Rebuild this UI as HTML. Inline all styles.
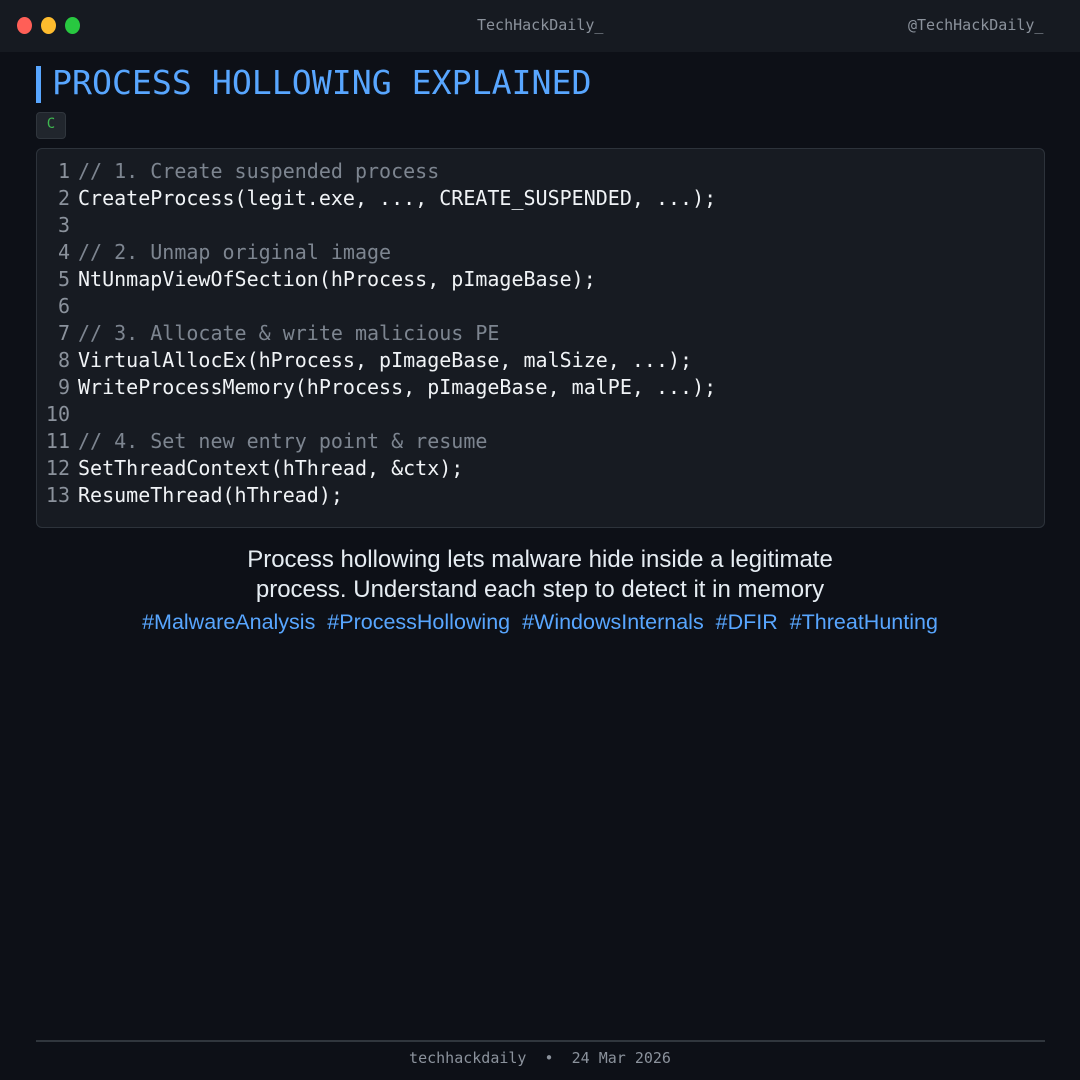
<!DOCTYPE html>
<html><head><meta charset="utf-8"><style>
*{margin:0;padding:0;box-sizing:border-box}
body{width:1080px;height:1080px;background:#0d1017;position:relative;overflow:hidden;font-family:"DejaVu Sans Mono","Liberation Mono",monospace}
.top{position:absolute;left:0;top:0;width:1080px;height:52px;background:#161a21}
.dot{position:absolute;top:17px;width:15px;height:17px;border-radius:50%}
.hdr{position:absolute;top:16px;font-size:15px;color:#8b929c}
.bar{position:absolute;left:36px;top:66px;width:5px;height:37px;background:#58a6ff}
.title{position:absolute;left:52px;top:63px;font-size:33.2px;color:#58a6ff;line-height:40px}
.tag{position:absolute;left:36px;top:112px;width:30px;height:27px;background:#21262d;border:1px solid #30363d;border-radius:4px;color:#3fb950;font-size:14px;text-align:center;line-height:22px}
.code{position:absolute;left:36px;top:148px;width:1009px;height:380px;background:#171b22;border:1px solid #2d333b;border-radius:6px}
.ln{position:absolute;left:0;width:33px;text-align:right;font-size:20px;color:#8b929c}
.tx{position:absolute;left:41px;font-size:20px;color:#f0f3f6;white-space:pre}
.c{color:#7d8590}
.p{position:absolute;left:0;width:1080px;text-align:center;font-family:"Liberation Sans",sans-serif;color:#e6edf3;font-size:24px}
.h{color:#58a6ff;font-size:21.5px}
.line{position:absolute;left:36px;top:1040px;width:1009px;height:2px;background:#30363d}
.foot{position:absolute;left:0;width:1080px;top:1049px;text-align:center;font-size:15px;color:#8b929c;white-space:pre}
</style></head><body>
<div class="top">
<div class="dot" style="left:17px;background:#ff5f57"></div>
<div class="dot" style="left:41px;background:#febc2e"></div>
<div class="dot" style="left:65px;background:#28c840"></div>
<div class="hdr" style="left:477px">TechHackDaily_</div>
<div class="hdr" style="left:908px">@TechHackDaily_</div>
</div>
<div class="bar"></div>
<div class="title">PROCESS HOLLOWING EXPLAINED</div>
<div class="tag">C</div>
<div class="code">
<div class="ln" style="top:10px">1</div><div class="tx c" style="top:10px">// 1. Create suspended process</div>
<div class="ln" style="top:37px">2</div><div class="tx" style="top:37px">CreateProcess(legit.exe, ..., CREATE_SUSPENDED, ...);</div>
<div class="ln" style="top:64px">3</div>
<div class="ln" style="top:91px">4</div><div class="tx c" style="top:91px">// 2. Unmap original image</div>
<div class="ln" style="top:118px">5</div><div class="tx" style="top:118px">NtUnmapViewOfSection(hProcess, pImageBase);</div>
<div class="ln" style="top:145px">6</div>
<div class="ln" style="top:172px">7</div><div class="tx c" style="top:172px">// 3. Allocate &amp; write malicious PE</div>
<div class="ln" style="top:199px">8</div><div class="tx" style="top:199px">VirtualAllocEx(hProcess, pImageBase, malSize, ...);</div>
<div class="ln" style="top:226px">9</div><div class="tx" style="top:226px">WriteProcessMemory(hProcess, pImageBase, malPE, ...);</div>
<div class="ln" style="top:253px">10</div>
<div class="ln" style="top:280px">11</div><div class="tx c" style="top:280px">// 4. Set new entry point &amp; resume</div>
<div class="ln" style="top:307px">12</div><div class="tx" style="top:307px">SetThreadContext(hThread, &amp;ctx);</div>
<div class="ln" style="top:334px">13</div><div class="tx" style="top:334px">ResumeThread(hThread);</div>
</div>
<div class="p" style="top:546px">Process hollowing lets malware hide inside a legitimate</div>
<div class="p" style="top:576px">process. Understand each step to detect it in memory</div>
<div class="p h" style="top:610px">#MalwareAnalysis&nbsp; #ProcessHollowing&nbsp; #WindowsInternals&nbsp; #DFIR&nbsp; #ThreatHunting</div>
<div class="line"></div>
<div class="foot">techhackdaily  •  24 Mar 2026</div>
</body></html>
